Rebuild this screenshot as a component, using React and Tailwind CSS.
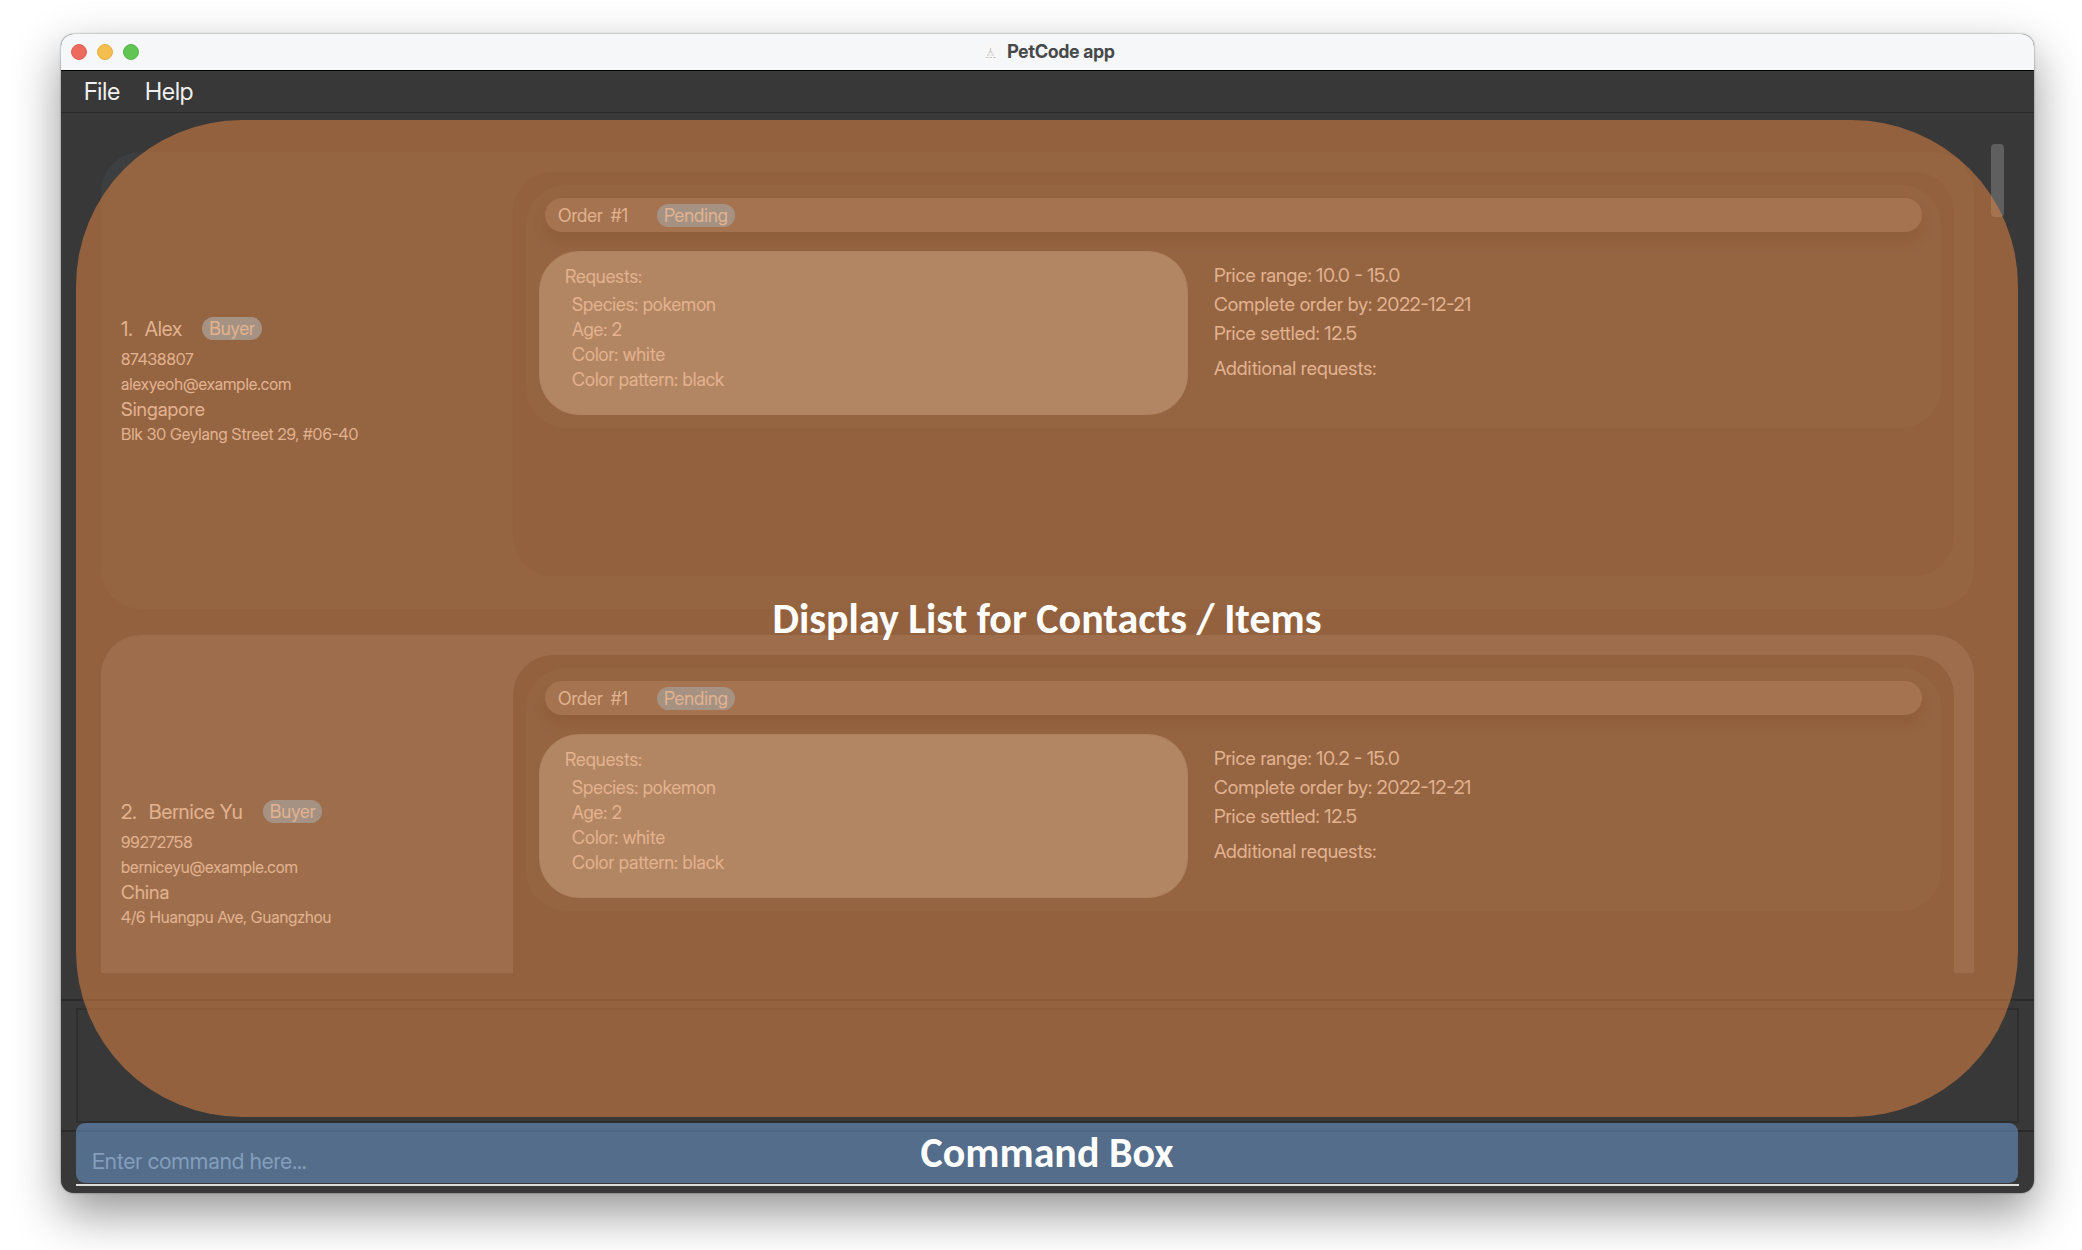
import React from "react";

const people = [
  {
    id: 1,
    name: "Alex",
    phone: "87438807",
    email: "alexyeoh@example.com",
    location: "Singapore",
    address: "Blk 30 Geylang Street 29, #06-40",
    price: "10.0 - 15.0",
    card: "bg-[#3c3e3f]",
  },
  {
    id: 2,
    name: "Bernice Yu",
    phone: "99272758",
    email: "berniceyu@example.com",
    location: "China",
    address: "4/6 Huangpu Ave, Guangzhou",
    price: "10.2 - 15.0",
    card: "bg-[#515658]",
  },
];

function Badge({ children }) {
  return (
    <span className="flex h-[23px] items-center rounded-full bg-[#5fa4d0] px-[7px] text-[18px]">
      {children}
    </span>
  );
}

function Order({ price }) {
  return (
    <article className="rounded-[40px] bg-[#3c3e3f] p-[13px] text-[18px]">
      <header className="mx-1.5 flex h-[34px] items-center rounded-full bg-[#5f5f5d] px-[13px] shadow-[0_10px_12px_rgba(0,0,0,0.22)]">
        <h3>Order</h3>
        <span className="ml-2">#1</span>
        <div className="ml-[29px]">
          <Badge>Pending</Badge>
        </div>
      </header>
      <div className="mt-[19px] grid grid-cols-[10fr_11fr] gap-[26px]">
        <section className="h-[164px] rounded-[40px] border border-[#777f7e] bg-[#7f8989] px-[25px] pt-[11px]">
          <h4 className="leading-[27px]">Requests:</h4>
          <ul className="ml-[7px] mt-0.5 leading-[25px]">
            <li>Species: pokemon</li>
            <li>Age: 2</li>
            <li>Color: white</li>
            <li>Color pattern: black</li>
          </ul>
        </section>
        <section className="pt-2.5 text-[19px] leading-[29px]">
          <p>Price range: {price}</p>
          <p>Complete order by: 2022-12-21</p>
          <p>Price settled: 12.5</p>
          <p className="mt-1.5">Additional requests:</p>
        </section>
      </div>
    </article>
  );
}

function PersonCard({ person }) {
  return (
    <li className="py-[13px]">
      <div className={`flex rounded-[40px] pb-[33px] pr-5 pt-5 ${person.card}`}>
        <div className="-mb-[33px] -mt-5 flex w-[412px] shrink-0 flex-col justify-center pl-5 text-[16px] leading-[25px]">
          <div className="mb-1 flex items-center text-[20px] leading-7">
            <span>{person.id}.</span>
            <h2 className="ml-3">{person.name}</h2>
            <div className="ml-5">
              <Badge>Buyer</Badge>
            </div>
          </div>
          <p>{person.phone}</p>
          <p>{person.email}</p>
          <p className="text-[19px]">{person.location}</p>
          <p>{person.address}</p>
        </div>
        <div className="h-[404px] flex-1 rounded-[40px] bg-[#383838] p-[13px]">
          <Order price={person.price} />
        </div>
      </div>
    </li>
  );
}

function TitleBar() {
  return (
    <header className="grid h-[37px] shrink-0 grid-cols-[1fr_auto_1fr] items-center border-b border-black bg-[#f5f7f9] px-2.5">
      <div className="flex gap-2.5">
        <button aria-label="Close" className="size-4 rounded-full border border-[#e0625a] bg-[#ec6a5e]" />
        <button aria-label="Minimize" className="size-4 rounded-full border border-[#e0b04a] bg-[#f4bf4f]" />
        <button aria-label="Zoom" className="size-4 rounded-full border border-[#58b54a] bg-[#61c554]" />
      </div>
      <h1 className="flex items-center gap-1.5 text-[18px] font-bold leading-6 text-[#464849]">
        <svg viewBox="0 0 21 21" className="size-[21px]" aria-hidden="true">
          <rect width="21" height="21" fill="#f6f7f6" />
          <path
            d="M10.5 6v3M8.500 11.500l2-2.500 2 2.500M7 13h2.500M11.500 13h2.500M5.500 15.500h3M9.500 15.500h2.500M13 15.500h3"
            stroke="#c9c9c6"
            strokeWidth="1.2"
            fill="none"
          />
        </svg>
        PetCode app
      </h1>
    </header>
  );
}

export default function App() {
  return (
    <div className="flex h-screen bg-white pb-[57px] pl-[61px] pr-12 pt-[34px] font-['Inter_Display','Inter',sans-serif]">
      <div className="flex min-w-0 flex-1 flex-col overflow-hidden rounded-[13px] bg-[#383838] text-[#eaeaea] shadow-[0_0_2px_rgba(0,0,0,0.5),0_20px_48px_rgba(0,0,0,0.42)]">
        <TitleBar />
        <nav className="flex h-[42px] shrink-0 items-center gap-[25px] border-b border-[#2b2b2b] px-[23px] text-[24px] text-[#f0f0f0]">
          <button>File</button>
          <button>Help</button>
        </nav>

        <main className="relative flex min-h-0 flex-1 flex-col">
          <div className="flex min-h-0 flex-1 border-b-2 border-[#2b2b2b] py-[26px] pl-10 pr-[30px]">
            <ul className="min-h-0 flex-1 overflow-hidden">
              {people.map((p) => (
                <PersonCard key={p.id} person={p} />
              ))}
            </ul>
            <div className="ml-[17px] mt-[5px] h-[73px] w-[13px] rounded bg-[#5f5f5f]" />
          </div>
          <div className="shrink-0 px-[15px] pt-[7px]">
            <output className="block h-[115px] border-2 border-[#2e2e2e]" />
          </div>
          <div className="pointer-events-none absolute bottom-1.5 left-[15px] right-4 top-[7px] flex items-center justify-center rounded-[166px] bg-[#de8344]/55">
            <h2 className="font-['Carlito','Lato',sans-serif] text-[42px] font-bold leading-[50px] text-white">
              Display List for Contacts / Items
            </h2>
          </div>
        </main>

        <form className="relative shrink-0 px-[15px] pb-[7px]">
          <div className="-mx-[15px] mb-1.5 mt-[7px] h-0.5 bg-[#2b2b2b]" />
          <input
            aria-label="Command"
            placeholder="Enter command here..."
            className="block h-12 w-full border-b-2 border-[#dcdfdb] bg-transparent px-4 text-[22px] outline-none placeholder:text-[#a4a4a4]"
          />
          <div className="pointer-events-none absolute bottom-2.5 left-[15px] right-4 top-0 flex items-center justify-center rounded-[9px] bg-[#6a99d0]/55">
            <h2 className="font-['Carlito','Lato',sans-serif] text-[42px] font-bold leading-[50px] text-white">
              Command Box
            </h2>
          </div>
        </form>
      </div>
    </div>
  );
}
